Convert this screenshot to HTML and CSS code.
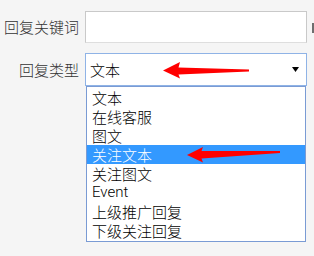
FILE: index.html
```html
<!DOCTYPE html>
<html lang="zh">
<head>
<meta charset="utf-8">
<link rel="stylesheet" href="styles.css">
</head>
<body>
<div class="form">
  <div class="label">回复关键词</div>
  <div class="input"></div>
  <div class="edge"><span class="edge-bar"></span></div>

  <div class="label">回复类型</div>
  <div class="select-wrap">
    <div class="select">
      <span class="value">文本</span>
      <svg class="caret" width="7" height="5" viewBox="0 0 7 5"><polygon points="0,0 7,0 3.5,5" fill="#000"/></svg>
    </div>
    <ul class="list">
      <li>文本</li>
      <li>在线客服</li>
      <li>图文</li>
      <li class="active">关注文本</li>
      <li>关注图文</li>
      <li class="latin">Event</li>
      <li>上级推广回复</li>
      <li>下级关注回复</li>
    </ul>
  </div>
</div>
<svg class="arrows" width="314" height="256" viewBox="0 0 314 256">
  <polygon points="163,70.5 180,62 178.5,67.5 249,69.5 249,71.5 178.5,74.5 180,78.5" fill="#ff0000"/>
  <polygon points="187,155 203,147 201.5,151 280,151 280,153 201.5,158.5 203,162.5" fill="#ff0000"/>
</svg>
</body>
</html>
```
FILE: styles.css
```css
html, body {
  margin: 0;
  padding: 0;
}
body {
  width: 314px;
  height: 256px;
  overflow: hidden;
  background: #f5f5f5;
  position: relative;
  font-family: "Noto Sans CJK SC", sans-serif;
}
.form {
  display: grid;
  grid-template-columns: 85px 222px 7px;
  row-gap: 10px;
  padding-top: 11px;
}
.label {
  align-self: center;
  text-align: right;
  padding-right: 6px;
  font-size: 15px;
  font-weight: 300;
  color: #333;
  line-height: 20px;
}
.input {
  height: 32px;
  box-sizing: border-box;
  border: 1px solid #c9c9c9;
  border-bottom-color: #dedede;
  background: #fff;
}
.edge {
  display: flex;
  justify-content: flex-end;
  align-items: center;
}
.edge-bar {
  width: 2px;
  height: 10px;
  background: #6e6e6e;
  margin-top: 1px;
}
.select-wrap {
  position: relative;
  grid-column: 2;
}
.select {
  height: 33px;
  box-sizing: border-box;
  border: 1px solid #8fb3e6;
  background: #fff;
  display: flex;
  align-items: center;
  justify-content: space-between;
  padding: 0 7px 0 4px;
  font-family: "Noto Sans CJK SC", sans-serif;
  font-size: 15px;
  font-weight: 300;
  color: #000;
}
.caret {
  display: block;
}
.list {
  position: absolute;
  top: 33px;
  left: 1px;
  right: 1px;
  margin: 0;
  padding: 1px 0;
  list-style: none;
  background: #fff;
  border: 1px solid #7a9bd4;
  font-family: "Noto Sans CJK SC", sans-serif;
  font-size: 15px;
  font-weight: 300;
  color: #000;
}
.list li {
  height: 19px;
  line-height: 19px;
  padding-left: 5px;
}
.list li.latin {
  font-family: Roboto, "Liberation Sans", sans-serif;
  font-weight: 300;
}
.list li.active {
  background: #3399ff;
  color: #fff;
}
.arrows {
  position: absolute;
  left: 0;
  top: 0;
  pointer-events: none;
}
```
